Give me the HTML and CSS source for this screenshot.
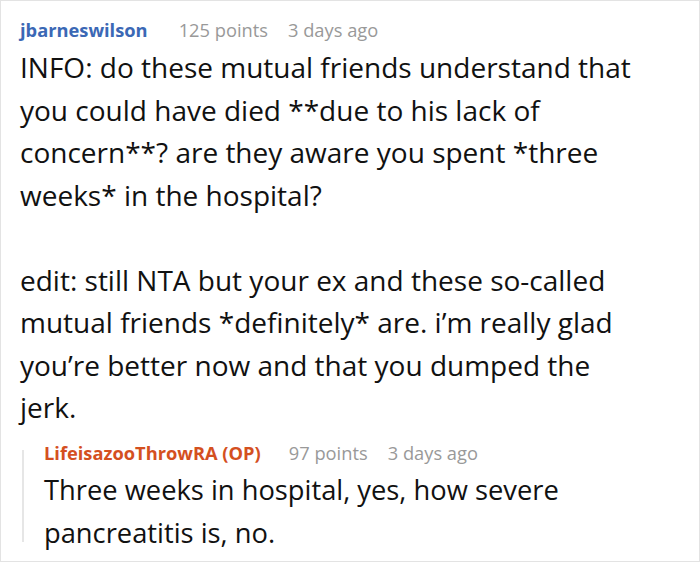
FILE: index.html
```html
<!DOCTYPE html>
<html>
<head>
<meta charset="utf-8">
<link rel="stylesheet" href="styles.css">
</head>
<body>
<div class="frame">
  <div class="comment">
    <div class="meta">
      <span class="author">jbarneswilson</span>
      <span class="info">125 points</span>
      <span class="info">3 days ago</span>
    </div>
    <div class="body">
      <p>INFO: do these mutual friends understand that you could have died **due to his lack of concern**? are they aware you spent *three weeks* in the hospital?</p>
      <p>edit: still NTA but your ex and these so-called mutual friends *definitely* are. i’m really glad you’re better now and that you dumped the jerk.</p>
    </div>
    <div class="reply">
      <div class="meta">
        <span class="author op">LifeisazooThrowRA (OP)</span>
        <span class="info">97 points</span>
        <span class="info">3 days ago</span>
      </div>
      <div class="body">
        <p>Three weeks in hospital, yes, how severe pancreatitis is, no.</p>
      </div>
    </div>
  </div>
</div>
</body>
</html>
```
FILE: styles.css
```css
html, body {
  margin: 0;
  padding: 0;
  background: #fff;
}
.frame {
  width: 700px;
  height: 562px;
  box-sizing: border-box;
  border: 1px solid #e3e3e3;
  overflow: hidden;
  font-family: "Open Sans", "Noto Sans", sans-serif;
}
.comment {
  padding: 17px 59px 0 19px;
}
.meta {
  display: flex;
  gap: 20px;
  font-size: 18.3px;
  line-height: 24px;
  align-items: baseline;
  white-space: nowrap;
}
.author {
  font-weight: 700;
  color: #3b68b5;
  margin-right: 11px;
}
.author.op {
  color: #d4501f;
  margin-right: 8px;
}
.info {
  color: #999;
}
.body {
  font-size: 28px;
  line-height: 42.5px;
  color: #111;
  margin-top: 4px;
}
.body p {
  margin: 0 0 42.5px 0;
}
.body p:last-child {
  margin-bottom: 0;
}
.reply {
  position: relative;
  margin: 12px 0 0 2px;
  padding-left: 22px;
}
.reply::before {
  content: "";
  position: absolute;
  left: 0;
  top: 9px;
  bottom: 12px;
  width: 2px;
  background: #e6e6e6;
}
.reply .body {
  font-size: 27.3px;
  line-height: 43px;
  margin-top: 3px;
}
```
